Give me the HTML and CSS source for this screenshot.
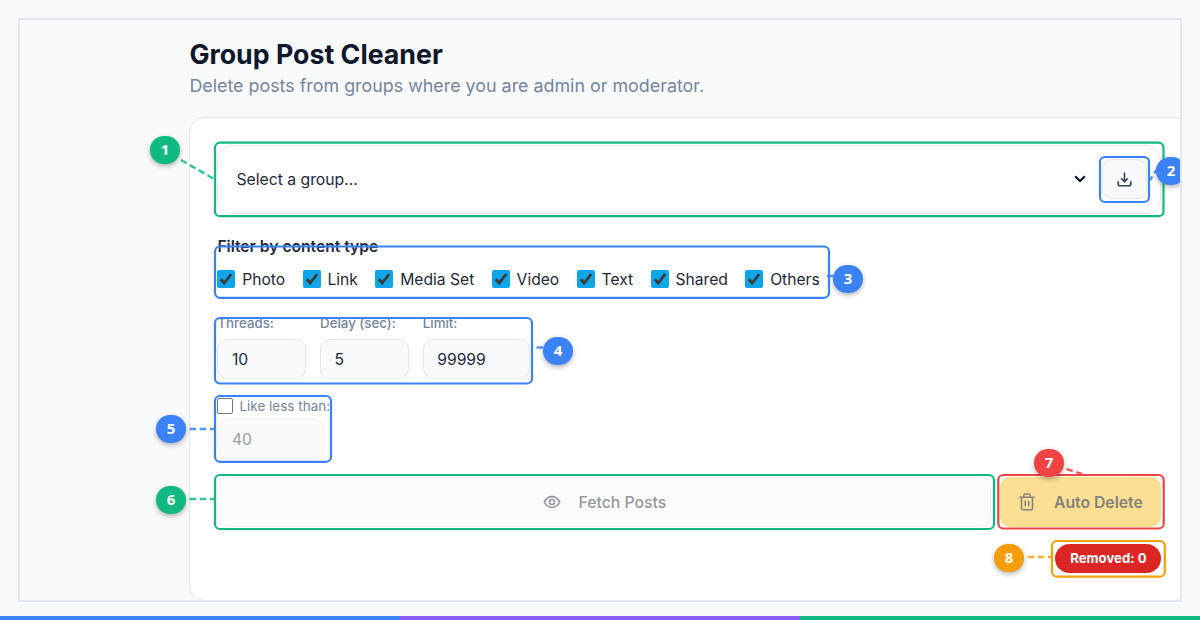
FILE: index.html
```html
<!DOCTYPE html>
<html lang="en">

<head>
    <meta charset="UTF-8">
    <meta name="viewport" content="width=device-width, initial-scale=1.0">
    <title>Group Post Cleaner</title>
    <link rel="stylesheet" href="styles.css">
</head>

<body>
    <div class="frame">
        <main class="page">
            <h1>Group Post Cleaner</h1>
            <p class="subtitle">Delete posts from groups where you are admin or moderator.</p>

            <div class="card">
                <div class="group-select">
                    <span class="group-name">Select a group...</span>
                    <svg class="chevron" width="12" height="8" viewBox="0 0 12 8" fill="none" stroke="#0f172a" stroke-width="2.2"><path d="M1.2 1.4 6 6l4.800-4.600"/></svg>
                    <button class="download" aria-label="Export groups">
                        <svg width="15" height="15" viewBox="0 0 15 15" fill="none" stroke="#334155" stroke-width="1.600" stroke-linecap="round" stroke-linejoin="round"><path d="M7.500 1v8.600M4.500 6.800l3 3 3-3M1.200 9.800v2.200q0 1.800 1.800 1.800h9q1.800 0 1.800-1.800V9.800"/></svg>
                    </button>
                </div>

                <h2>Filter by content type</h2>
                <div class="types">
                    <label><span class="check"><svg viewBox="0 0 18 18"><path d="m3.800 9.300 3.400 3.700 7-8.800"/></svg></span>Photo</label>
                    <label><span class="check"><svg viewBox="0 0 18 18"><path d="m3.800 9.300 3.400 3.700 7-8.800"/></svg></span>Link</label>
                    <label><span class="check"><svg viewBox="0 0 18 18"><path d="m3.800 9.300 3.400 3.700 7-8.800"/></svg></span>Media Set</label>
                    <label><span class="check"><svg viewBox="0 0 18 18"><path d="m3.800 9.300 3.400 3.700 7-8.800"/></svg></span>Video</label>
                    <label><span class="check"><svg viewBox="0 0 18 18"><path d="m3.800 9.300 3.400 3.700 7-8.800"/></svg></span>Text</label>
                    <label><span class="check"><svg viewBox="0 0 18 18"><path d="m3.800 9.300 3.400 3.700 7-8.800"/></svg></span>Shared</label>
                    <label><span class="check"><svg viewBox="0 0 18 18"><path d="m3.800 9.300 3.400 3.700 7-8.800"/></svg></span>Others</label>
                </div>

                <div class="numbers">
                    <div class="field">
                        <label for="threads">Threads:</label>
                        <input type="text" id="threads" value="10">
                    </div>
                    <div class="field">
                        <label for="delay">Delay (sec):</label>
                        <input type="text" id="delay" value="5">
                    </div>
                    <div class="field wide">
                        <label for="limit">Limit:</label>
                        <input type="text" id="limit" value="99999">
                    </div>
                </div>

                <div class="likes">
                    <label><span class="check empty"></span>Like less than:</label>
                    <input type="text" value="40" disabled>
                </div>

                <div class="actions">
                    <button class="fetch">
                        <svg width="18" height="14" viewBox="0 0 18 14" fill="none" stroke="#94979e" stroke-width="1.600"><path d="M1.200 7Q4 1.600 9 1.600T16.800 7Q14 12.400 9 12.400T1.200 7Z"/><circle cx="9" cy="7" r="2.500"/></svg>
                        Fetch Posts
                    </button>
                    <button class="auto-delete">
                        <svg width="16" height="18" viewBox="0 0 16 18" fill="none" stroke="#85817b" stroke-width="1.500" stroke-linejoin="round"><path d="M.5 4.300h15M2.500 4.300v10.900q0 1.600 1.600 1.600h7.800q1.600 0 1.600-1.600V4.300M4.800 4.300V2.500q0-1.500 1.500-1.500h3.400q1.500 0 1.500 1.500v1.800M6.300 7.800v5.500M9.700 7.800v5.500"/></svg>
                        Auto Delete
                    </button>
                </div>
                <div class="removed">Removed: 0</div>
            </div>
        </main>

        <!-- callouts: outlines and leader lines -->
        <svg class="callouts" viewBox="20 20 1160 580">
            <g class="green">
                <rect x="215" y="142.700" width="948.500" height="73.500" rx="5"/>
                <rect x="215" y="475" width="779" height="54" rx="5"/>
                <path class="leader" d="M181 160l33 19M189.500 499H214"/>
            </g>
            <g class="blue">
                <rect x="1100" y="157" width="49" height="45" rx="5"/>
                <rect x="215" y="246.500" width="614" height="51.300" rx="5"/>
                <rect x="215" y="318" width="317" height="65.500" rx="5"/>
                <rect x="215" y="396" width="116" height="65.800" rx="5"/>
                <path class="leader" d="M1158 168l-8 12M827 276h8M536.500 347.500h7M189.500 429H214"/>
            </g>
            <g class="red">
                <rect x="998.300" y="475" width="165.400" height="53.500" rx="5"/>
                <path class="leader" d="M1066.500 469l15.500 5"/>
            </g>
            <g class="orange">
                <rect x="1052" y="541" width="112.800" height="35.700" rx="5"/>
                <path class="leader" d="M1027.500 557H1052"/>
            </g>
        </svg>
        <span class="badge badge-1">1</span>
        <span class="badge badge-2">2</span>
        <span class="badge badge-3">3</span>
        <span class="badge badge-4">4</span>
        <span class="badge badge-5">5</span>
        <span class="badge badge-6">6</span>
        <span class="badge badge-7">7</span>
        <span class="badge badge-8">8</span>
    </div>
    <div class="stripe"></div>
</body>

</html>
```
FILE: styles.css
```css
* {
    box-sizing: border-box;
}

body {
    margin: 0;
    height: 620px;
    overflow: hidden;
    background: #f8fafc;
    font-family: Inter, sans-serif;
    color: #1e293b;
}

h1, h2, p {
    margin: 0;
}

.frame {
    position: relative;
    height: 584px;
    margin: 18px 18px 14px;
    border: 2px solid #e2e8f0;
    overflow: hidden;
}

.page {
    width: 1169px;
    padding: 16px 0 0 169.400px;
}

h1 {
    font-size: 26.750px;
    line-height: 36px;
    font-weight: 700;
    color: #0f172a;
    white-space: nowrap;
}

.subtitle {
    font-size: 17.860px;
    line-height: 28px;
    color: #76859a;
}

.card {
    height: 484px;
    margin-top: 17px;
    padding: 27px;
    background: white;
    border: 1px solid #e2e8f0;
    border-radius: 15px;
}

.group-select {
    display: flex;
    align-items: center;
    width: 944px;
    height: 69px;
    padding: 0 13px 1px 18px;
    border: 1px solid #e5e8ec;
    border-radius: 15px;
    font-size: 15.750px;
}

.group-name {
    flex: 1;
}

.chevron {
    margin-right: 16px;
}

button {
    display: flex;
    align-items: center;
    justify-content: center;
    padding: 0;
    font-family: inherit;
}

.download {
    width: 45px;
    height: 40px;
    border: 1px solid #e2e8f0;
    border-radius: 10px;
    background: #f8fafc;
}

h2 {
    margin-top: 23px;
    font-size: 15.650px;
    line-height: 20px;
    font-weight: 600;
}

.types {
    display: flex;
    gap: 17.500px;
    height: 18px;
    margin-top: 13px;
    font-size: 15.650px;
}

.types label {
    display: flex;
    align-items: center;
    gap: 6.800px;
}

.check {
    width: 18px;
    height: 18px;
    border-radius: 2px;
    background: #0ea5e9;
}

.check svg {
    display: block;
    fill: none;
    stroke: #3b3b3b;
    stroke-width: 2.800;
}

.numbers {
    display: flex;
    gap: 13.700px;
    margin-top: 27px;
}

.field {
    width: 89px;
}

.field.wide {
    width: 107px;
}

.field label {
    display: block;
    height: 24px;
    font-size: 13.300px;
    line-height: 16px;
    font-weight: 500;
    color: #76859a;
}

input {
    display: block;
    width: 100%;
    height: 40px;
    padding: 0 13.500px;
    border: 1px solid #e2e8f0;
    border-radius: 10px;
    background: #f8fafc;
    font-family: inherit;
    font-size: 15.650px;
    color: #1e293b;
}

.likes {
    width: 107px;
    margin-top: 18px;
}

.likes label {
    display: flex;
    align-items: center;
    gap: 6px;
    height: 18px;
    margin-bottom: 4px;
    font-size: 13.500px;
    white-space: nowrap;
    color: #76859a;
}

.check.empty {
    flex: none;
    width: 16px;
    height: 16px;
    border: 1px solid #767676;
    background: white;
}

.likes input {
    border-color: #f1f2f3;
    background: #fbfbfb;
    color: #999ca1;
}

.actions {
    display: flex;
    gap: 9px;
    width: 944px;
    margin-top: 18px;
}

.actions button {
    height: 50px;
    border-radius: 10px;
    font-size: 15.750px;
}

.fetch {
    flex: 1;
    gap: 18px;
    border: 1px solid #f1f2f3;
    background: #fcfcfc;
    font-weight: 500;
    color: #94979e;
}

.auto-delete {
    width: 161px;
    gap: 19px;
    border: none;
    background: #fcdf92;
    font-weight: 600;
    color: #85817b;
}

.removed {
    width: 106px;
    height: 29px;
    margin: 17px 0 0 838px;
    border-radius: 15px;
    background: #dc2626;
    font-size: 13.200px;
    line-height: 29px;
    font-weight: 700;
    text-align: center;
    color: white;
}

/* callouts lie over the form */
.callouts {
    position: absolute;
    top: 0;
    left: 0;
    width: 1160px;
    height: 580px;
    fill: none;
    stroke-width: 2.200;
}

.leader {
    stroke-width: 2.500;
    stroke-dasharray: 6.500 3.700;
    opacity: 0.850;
}

.green {
    stroke: #10b981;
}

.blue {
    stroke: #3b82f6;
}

.red {
    stroke: #ef4444;
}

.orange {
    stroke: #f59e0b;
}

.badge {
    position: absolute;
    width: 30px;
    height: 28px;
    border-radius: 14px;
    background: #3b82f6;
    box-shadow: 0 2px 5px rgba(0, 0, 0, 0.300);
    font: 700 15px/26px "Open Sans", sans-serif;
    text-align: center;
    color: white;
}

.badge-1 {
    top: 116px;
    left: 130px;
    background: #10b981;
}

.badge-2 {
    top: 137px;
    left: 1136px;
}

.badge-3 {
    top: 245px;
    left: 813px;
}

.badge-4 {
    top: 317px;
    left: 523px;
}

.badge-5 {
    top: 395px;
    left: 136px;
}

.badge-6 {
    top: 466px;
    left: 136px;
    background: #10b981;
}

.badge-7 {
    top: 429px;
    left: 1014px;
    background: #ef4444;
}

.badge-8 {
    top: 524px;
    left: 974px;
    background: #f59e0b;
}

.stripe {
    height: 4px;
    background: linear-gradient(to right, #3b82f6 33.333%, #8b5cf6 33.333% 66.667%, #10b981 66.667%);
}
```
